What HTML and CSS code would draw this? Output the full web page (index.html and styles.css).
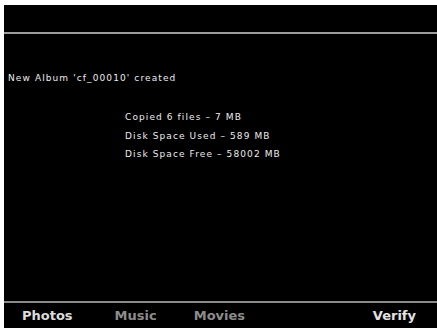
FILE: index.html
```html
<!DOCTYPE html>
<html lang="en">
<head>
  <meta charset="UTF-8">
  <title>Album Created</title>
  <link rel="stylesheet" href="styles.css">
</head>
<body>
  <div class="screen">
    <div class="header"></div>
    <div class="content">
      <p class="message">New Album 'cf_00010' created</p>
      <div class="stats">
        <p>Copied 6 files &ndash; 7 MB</p>
        <p>Disk Space Used &ndash; 589 MB</p>
        <p>Disk Space Free &ndash; 58002 MB</p>
      </div>
    </div>
    <div class="tabs">
      <span class="tab active">Photos</span>
      <span class="tab">Music</span>
      <span class="tab">Movies</span>
      <span class="tab verify">Verify</span>
    </div>
  </div>
</body>
</html>
```

FILE: styles.css
```css
* {
  margin: 0;
  padding: 0;
  box-sizing: border-box;
}

body {
  background: #fff;
  width: 437px;
  height: 328px;
  overflow: hidden;
  padding: 5px 0 0 4px;
}

/* Device screen */
.screen {
  background: #000;
  height: 323px;
  display: flex;
  flex-direction: column;
  font-family: "DejaVu Sans", sans-serif;
}

.header {
  height: 29px;
  border-bottom: 2px solid #9c9c9c;
}

.content {
  flex: 1;
  border-bottom: 2px solid #8a8a8a;
  color: #ececec;
  font-size: 9px;
  letter-spacing: 1.1px;
}

.message {
  margin: 39px 0 0 4px;
}

.stats {
  margin: 29px 0 0 121px;
  display: flex;
  flex-direction: column;
  gap: 8.5px;
}

/* Bottom tab bar */
.tabs {
  height: 25px;
  display: flex;
  align-items: center;
  padding: 0 21px 0 18px;
  font-size: 13px;
  font-weight: bold;
  color: #8c8c8c;
}

.tab {
  margin-right: 42px;
}

.tab:nth-child(2) {
  margin-right: 37px;
}

.tab.active {
  color: #dcdcdc;
}

.tab.verify {
  margin: 0 0 0 auto;
  color: #e4e4e4;
}
```
